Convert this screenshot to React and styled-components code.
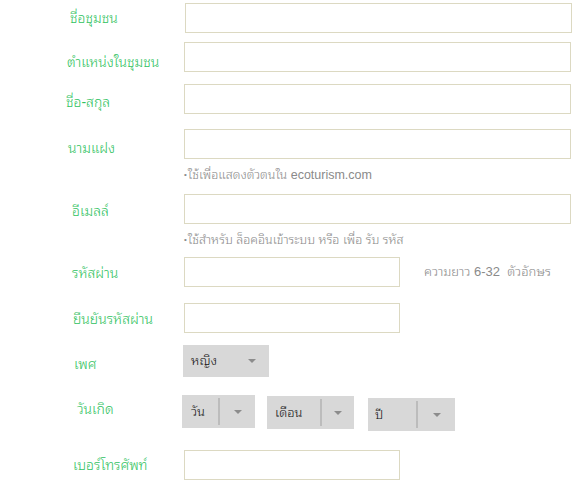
import React from "react"
import styled, { createGlobalStyle } from "styled-components"

const Global = createGlobalStyle`
  body {
    margin: 0;
    background: #fff;
    font-family: Tahoma, "Liberation Sans", "Noto Sans Thai Looped", Loma, "Noto Sans Thai", "Noto Sans", sans-serif;
  }
`

const Form = styled.div`
  padding-top: 3px;
  width: 583px;
`

const Row = styled.div`
  display: flex;
  align-items: flex-start;
  height: ${p => p.$h}px;
`

const Label = styled.div`
  box-sizing: border-box;
  width: ${p => p.$w || 184}px;
  padding-left: ${p => p.$x}px;
  padding-top: ${p => p.$y}px;
  font-size: 14px;
  font-weight: 300;
  line-height: 20px;
  color: #2fc260;
  white-space: nowrap;
`

const Field = styled.div`
  display: flex;
  flex-direction: column;
`

const Input = styled.div`
  box-sizing: border-box;
  width: ${p => p.$w}px;
  height: 30px;
  border: 1px solid #dcd9c2;
  background: #fff;
`

const Hint = styled.div`
  margin-top: 8px;
  font-size: 12.5px;
  font-weight: 300;
  line-height: 16px;
  color: #8a8a8a;
  white-space: nowrap;
  &::before {
    content: "•";
    font-size: 8px;
    margin-right: 1px;
    vertical-align: 2px;
  }
`

const Side = styled.div`
  margin-left: 24px;
  padding-top: 7px;
  font-size: 13px;
  font-weight: 300;
  line-height: 16px;
  color: #8a8a8a;
  white-space: pre;
`

const Selects = styled.div`
  display: flex;
  align-items: flex-start;
`

const Select = styled.div`
  box-sizing: border-box;
  display: flex;
  align-items: center;
  width: ${p => p.$w}px;
  height: ${p => p.$hh || 33}px;
  margin-left: ${p => p.$ml || 0}px;
  margin-top: ${p => p.$mt || 0}px;
  background: #d8d8d8;
  color: #111;
  font-size: 13px;
  font-weight: 300;
`

const Value = styled.div`
  box-sizing: border-box;
  width: ${p => p.$w}px;
  padding-left: ${p => p.$pl}px;
  line-height: 20px;
  white-space: nowrap;
`

const Divider = styled.div`
  width: 2px;
  align-self: stretch;
  margin: 3px 0;
  background: #bcbcbc;
`

const Caret = styled.div`
  flex: 1;
  display: flex;
  justify-content: center;
  align-items: center;
  &::after {
    content: "";
    border-left: 4px solid transparent;
    border-right: 4px solid transparent;
    border-top: 4px solid #8c8c8c;
  }
`

export default function App() {
  return (
    <>
      <Global />
      <Form>
        <Row $h={39}>
          <Label $w={185} $x={70} $y={5}>ชื่อชุมชน</Label>
          <Input $w={387} />
        </Row>
        <Row $h={42}>
          <Label $x={67} $y={10}>ตำแหน่งในชุมชน</Label>
          <Input $w={387} />
        </Row>
        <Row $h={45}>
          <Label $x={66} $y={8}>ชื่อ-สกุล</Label>
          <Input $w={387} />
        </Row>
        <Row $h={65}>
          <Label $x={68} $y={9}>นามแฝง</Label>
          <Field>
            <Input $w={387} />
            <Hint>ใช้เพื่อแสดงตัวตนใน ecoturism.com</Hint>
          </Field>
        </Row>
        <Row $h={63}>
          <Label $x={72} $y={7}>อีเมลล์</Label>
          <Field>
            <Input $w={387} />
            <Hint>ใช้สำหรับ ล็อคอินเข้าระบบ หรือ เพื่อ รับ รหัส</Hint>
          </Field>
        </Row>
        <Row $h={46}>
          <Label $x={72} $y={6}>รหัสผ่าน</Label>
          <Input $w={216} />
          <Side>ความยาว 6-32  ตัวอักษร</Side>
        </Row>
        <Row $h={42}>
          <Label $x={73} $y={6}>ยืนยันรหัสผ่าน</Label>
          <Input $w={216} />
        </Row>
        <Row $h={50}>
          <Label $w={183} $x={74} $y={9}>เพศ</Label>
          <Select $w={86} $hh={32}>
            <Value $w={52} $pl={8}>หญิง</Value>
            <Caret />
          </Select>
        </Row>
        <Row $h={55}>
          <Label $w={182} $x={77} $y={4}>วันเกิด</Label>
          <Selects>
            <Select $w={73}>
              <Value $w={36} $pl={9}>วัน</Value>
              <Divider />
              <Caret />
            </Select>
            <Select $w={87} $ml={12} $mt={1}>
              <Value $w={53} $pl={8}>เดือน</Value>
              <Divider />
              <Caret />
            </Select>
            <Select $w={87} $ml={14} $mt={3}>
              <Value $w={48} $pl={7}>ปี</Value>
              <Divider />
              <Caret />
            </Select>
          </Selects>
        </Row>
        <Row $h={41}>
          <Label $x={73} $y={5}>เบอร์โทรศัพท์</Label>
          <Input $w={216} />
        </Row>
      </Form>
    </>
  )
}
